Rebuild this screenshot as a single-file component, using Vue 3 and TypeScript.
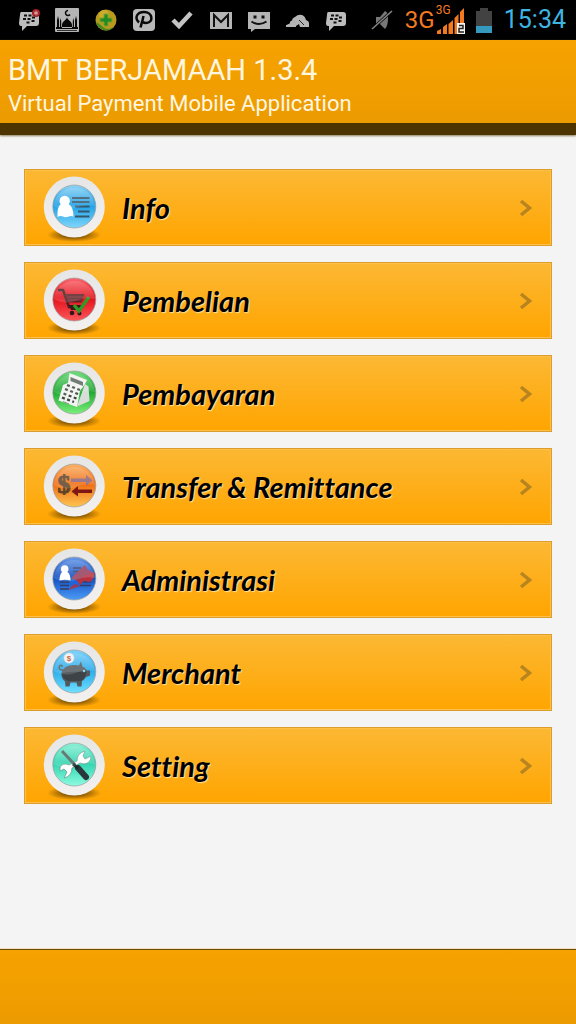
<script setup lang="ts">
interface MenuItem {
  id: string
  label: string
  light: string
  dark: string
  glow: string
}

const items: MenuItem[] = [
  { id: 'info', label: 'Info', light: '#8fd4f5', dark: '#1a9fe6', glow: '#7fd6fb' },
  { id: 'buy', label: 'Pembelian', light: '#fb6a70', dark: '#e30d18', glow: '#fb5a5c' },
  { id: 'pay', label: 'Pembayaran', light: '#6fdc7c', dark: '#18a52c', glow: '#7bf07c' },
  { id: 'transfer', label: 'Transfer & Remittance', light: '#fbb367', dark: '#ef6a10', glow: '#fdc552' },
  { id: 'admin', label: 'Administrasi', light: '#6c9be8', dark: '#0d4cc0', glow: '#4d9bf5' },
  { id: 'merchant', label: 'Merchant', light: '#7fd3fa', dark: '#27a9ea', glow: '#6fe0ff' },
  { id: 'setting', label: 'Setting', light: '#8cf0d6', dark: '#2cd4ae', glow: '#8dfbe0' },
]

const notices = ['bbm-alert', 'mosque', 'shield', 'path', 'check', 'gmail', 'sms', 'prayer', 'bbm']
</script>

<template>
  <div class="screen">
    <div class="status">
      <div class="notices">
        <svg v-for="n in notices" :key="n" class="notice" viewBox="0 0 26 26" aria-hidden="true">
          <g v-if="n === 'bbm-alert' || n === 'bbm'">
            <path fill="#bdbdbd" d="M5 5h15q3 0 3 3v8q0 3-3 3h-9l-5 5v-5H5q-2 0-2-3l1-8q0-3 1-3z" />
            <path stroke="#111" stroke-width="2" d="M8 8.500h3M12.500 8.500h3M7 12h3M11.500 12h3M16 10.500h3M10.500 15.500h3M15.500 14h3" />
            <g v-if="n === 'bbm-alert'">
              <circle cx="20" cy="6" r="4" fill="#9c1f24" />
              <path stroke="#e8a0a0" d="M20 3.500v5M17.800 4.800l4.400 2.400M22.200 4.800l-4.400 2.400" />
            </g>
          </g>
          <g v-else-if="n === 'mosque'">
            <rect x="1" y="1" width="24" height="24" rx="1" fill="#b5b5b5" />
            <path fill="#080808" d="M13 10c0 3-5 4-5 8v3h10v-3c0-4-5-5-5-8zM3 13l1-4 1 4v8H3zM21 13l1-4 1 4v8h-2zM6 14l.6-3 .6 3v7H6zM18.800 14l.6-3 .6 3v7h-1.200zM2 20h22v2H2z" />
            <path fill="none" stroke="#080808" stroke-width="1.500" d="M14 3.500a2.500 2.500 0 1 0 2 4" />
            <path stroke="#333" d="M3 23.500h20" />
          </g>
          <g v-else-if="n === 'shield'">
            <circle cx="13" cy="13" r="10.500" fill="#b99a1c" />
            <path fill="#4b8a22" d="M3 15a10.500 10.500 0 0 0 18 5Q14 24 10 20T3 15z" />
            <circle cx="11" cy="8" r="5" fill="#d3b532" opacity=".7" />
            <path fill="#228b22" stroke="#80a030" d="M11 7h4v4h4v4h-4v4h-4v-4H7v-4h4z" />
          </g>
          <g v-else-if="n === 'path'">
            <rect x="2" y="2" width="22" height="22" rx="4" fill="#b9b9b9" />
            <path fill="none" stroke="#080808" stroke-width="2.500" d="M8 15.500C3 11 6 5 13 5c9 0 10 11 2 11q-2 0-3-1M12.500 9c-1 5-2 8-3 11.500" />
          </g>
          <path v-else-if="n === 'check'" fill="none" stroke="#c4c4c4" stroke-width="4.500" d="M4 13l6 6L22 6" />
          <g v-else-if="n === 'gmail'">
            <rect x="2" y="5" width="22" height="17" fill="#b5b5b5" />
            <path fill="none" stroke="#111" stroke-width="2" d="M6 20V8l7 7 7-7v12" />
          </g>
          <g v-else-if="n === 'sms'">
            <path fill="#b5b5b5" d="M2 5h22v17H9l-4 3v-3H2z" />
            <path stroke="#111" stroke-width="3" d="M9 8.500v3M17 8.500v3" />
            <path fill="none" stroke="#111" stroke-width="2" d="M5.500 14.500q7.500 5 15 0" />
          </g>
          <g v-else>
            <path fill="#b5b5b5" d="M8 14q0-3 3-4 3-3 7-2 3 1 4 5 3 1 3 3v4h-9l-1-3-3 2H9l2-4z" />
            <circle cx="8.500" cy="16" r="2.600" fill="#b5b5b5" />
            <path stroke="#b5b5b5" stroke-width="2" d="M2 19h10M3 19l4-2" />
            <path fill="none" stroke="#222" d="M15 13l5 5" />
          </g>
        </svg>
      </div>
      <svg class="mute" viewBox="0 0 22 26" aria-hidden="true">
        <path fill="#777" d="M5 10h4l5-6q4 2 3 7 0 8-3 11l-5-5H5z" />
        <path stroke="#000" stroke-width="3" d="M1 22L21 4" />
        <path stroke="#888" stroke-width="1.500" d="M1 22L21 4" />
      </svg>
      <span class="net">3G</span>
      <span class="signal">
        <span class="net-small">3G</span>
        <svg viewBox="0 0 30 28" aria-hidden="true">
          <path fill="#f47a22" d="M1 28v-3l4-2v5zM7 28v-7l4-3v10zM12.500 28V18l4.500-4v14zM18.500 28V12l4-4v20zM24 28V6l4-4v26z" />
          <rect x="21" y="17" width="8" height="11" fill="#f7f3ef" />
          <path fill="none" stroke="#222" stroke-width="1.500" d="M23 19.500h4v3h-4v3.500h5" />
        </svg>
      </span>
      <svg class="battery" viewBox="0 0 16 25" aria-hidden="true">
        <path fill="#424242" d="M4 0h8v3h4v15H0V3h4z" />
        <rect y="18" width="16" height="7" fill="#3499bd" />
      </svg>
      <time class="clock">15:34</time>
    </div>

    <header class="header">
      <h1>BMT BERJAMAAH 1.3.4</h1>
      <p>Virtual Payment Mobile Application</p>
    </header>

    <main class="menu">
      <button v-for="item in items" :key="item.id" type="button" class="row">
        <svg class="icon" viewBox="0 0 64 68" aria-hidden="true">
          <defs>
            <linearGradient :id="item.id + '-fill'" x1="0" y1="0" x2="0" y2="1">
              <stop offset="0" :stop-color="item.light" />
              <stop offset=".45" :stop-color="item.dark" />
              <stop offset="1" :stop-color="item.glow" />
            </linearGradient>
            <radialGradient :id="item.id + '-shade'">
              <stop offset=".2" stop-color="#5a3a00" stop-opacity=".9" />
              <stop offset="1" stop-color="#5a3a00" stop-opacity="0" />
            </radialGradient>
            <linearGradient :id="item.id + '-ring'" x1="0" y1="0" x2="0" y2="1">
              <stop offset="0" stop-color="#e6e6e6" />
              <stop offset="1" stop-color="#f3f1f0" />
            </linearGradient>
          </defs>
          <ellipse cx="32" cy="61" rx="27" ry="7" :fill="`url(#${item.id}-shade)`" />
          <circle cx="32.300" cy="33" r="30.500" :fill="`url(#${item.id}-ring)`" />
          <circle cx="32.300" cy="32.500" r="21.500" :fill="`url(#${item.id}-fill)`" stroke="#9a9a9a" stroke-opacity=".7" />

          <g v-if="item.id === 'info'">
            <path stroke="#35566b" stroke-width="1.800" d="M30 24h17.500M30 28h17.500M33 32.500h14.500M36 37.500h11.500M33 42.500h14.500" />
            <circle cx="22.700" cy="27" r="5.200" fill="#fff" />
            <path fill="#fff" d="M19 30h7.500q5 2.500 5 12.500-3-1-4.500 0-4 1.500-6 0-3-1-5.500 .5-.5-10.500 3.500-13z" />
          </g>
          <g v-else-if="item.id === 'buy'">
            <path fill="none" stroke="#4a2024" stroke-width="2.500" stroke-linejoin="round" d="M16 23h5l6 17h13" />
            <path fill="#5b2227" d="M24 27h18.500l-3 8.500H27z" />
            <path stroke="#8d3338" d="M25.500 30h16M27 33h13" />
            <path fill="#3b1719" d="M27 38h12v5H29z" />
            <circle cx="30" cy="46" r="2.300" fill="#30181a" /><circle cx="37.500" cy="46.500" r="2" fill="#30181a" />
            <path fill="none" stroke="#2f9a25" stroke-width="3.500" d="M32 38l5 6 10-14" />
          </g>
          <g v-else-if="item.id === 'pay'">
            <path fill="#d9ddd9" d="M35 46.500L43 24l3.500 2.500 1 14.500z" />
            <path fill="#f1f3f1" d="M16.500 40.500L21 25l5-2 1.500-10L45 20l-2 4-5 7-3 16z" />
            <path fill="#5b665d" d="M28.500 17l12.500 5v4l-12.500-5z" />
            <path stroke="#3b443c" stroke-width="2.300" stroke-dasharray="3 2.500" d="M25 25l13 5M23 29l13 5M21.500 33.500l13 5M20 37.500l12 4.500" />
            <path stroke="#879088" d="M21 41.500l6 2.500" />
          </g>
          <g v-else-if="item.id === 'transfer'">
            <text class="dollar" x="22" y="40" text-anchor="middle" fill="#5f4428" stroke="#5f4428">$</text>
            <path fill="#8b6277" d="M29 25.500h15v-3.500l6.500 5.500-6.500 5v-3.500H29z" />
            <path fill="#7d1713" d="M50 36.500H36V33l-6.500 5.500 6.500 5V40h14z" />
          </g>
          <g v-else-if="item.id === 'admin'">
            <path stroke="#343d65" stroke-width="1.300" d="M31 22h8M31 25.500h8M18 36h9M18 39.500h9M18 43h9M31 36h18M31 39.500h18" />
            <path fill="#963b59" d="M30 31l13-12 3 5 7 3q-1 7-5 9l-6-1-6 6-10 3 5-5z" />
            <path fill="#c42f38" d="M35 34l12-6 5-1q-1 7-5 9l-5-2-5 6z" opacity=".75" />
            <path fill="#1e65dc" d="M30 33q7 1 8 7l-5-2-5 2z" />
            <circle cx="22.700" cy="23" r="3.800" fill="#fff" />
            <path fill="#fff" d="M20 26h5.500q3 2 3 8.500-5.500-1.500-11 0 0-6 2.500-8.500z" />
          </g>
          <g v-else-if="item.id === 'merchant'">
            <path fill="#535a5f" d="M19.500 34q2-8 12.500-8 4 0 5 .5l2-4 1.500 5q3 1 4.500 4l3 0v5l-4 1.500q-2 3-4 4l-.5 5.500h-4l-1-4h-6l-1 4h-4l-.5-5q-4-3-3.500-8.500z" />
            <path fill="none" stroke="#535a5f" stroke-width="1.500" d="M21 31q-5 0-3.500-4 2-2 3 1" />
            <path fill="#3e4347" d="M19.500 34q12-2 25-1-1 7-6 9H26q-6-3-6.500-8z" />
            <circle cx="42" cy="32" r="1.200" fill="#80d7f2" />
            <circle cx="27" cy="19" r="5.200" fill="#eef2f2" stroke="#bcc" stroke-width=".6" />
            <text class="coin" x="27" y="22" text-anchor="middle" fill="#c34b32">$</text>
          </g>
          <g v-else>
            <path fill="#fff" stroke="#6c9c90" stroke-width=".8" d="M18 39q-1-7 6-7l3 1 8-4q0-8 8-10l-2 5 2 3 6-3q0 7-7 8l-4-1-8 5q0 8-8 10l3-6-3-3z" />
            <path stroke="#4f625e" stroke-width="3" d="M20 19l13 14" />
            <path stroke="#29393b" stroke-width="6" stroke-linecap="round" d="M36 36l8 9" />
            <path stroke="#17282b" stroke-width="3" d="M31 32l5 4" />
          </g>
          <path fill="#fff" opacity=".15" d="M11.500 32a21 21 0 0 1 41.600 0q-10-2-20 2t-21.600-2z" />
        </svg>
        <span class="label">{{ item.label }}</span>
        <svg class="chevron" viewBox="0 0 14 18" aria-hidden="true">
          <path fill="none" stroke="#b8841f" stroke-width="3.500" d="M2 2l8.500 7L2 16" />
        </svg>
      </button>
    </main>

    <footer class="footer"></footer>
  </div>
</template>

<style>
body {
  background: #f4f4f4;
}
</style>

<style scoped>
.screen {
  display: flex;
  flex-direction: column;
  min-height: 100vh;
  font-family: Roboto, "Liberation Sans", sans-serif;
}
.status {
  display: flex;
  align-items: center;
  height: 40px;
  padding: 0 10px;
  background: #000;
}
.notices {
  display: flex;
  flex: 1;
  justify-content: space-around;
}
.notice {
  width: 26px;
  height: 26px;
}
.mute {
  width: 22px;
  height: 26px;
  margin: 0 12px 0 16px;
}
.net {
  width: 31px;
  color: #f47a22;
  font-size: 24px;
  line-height: 40px;
}
.signal {
  position: relative;
  width: 30px;
  height: 28px;
}
.signal svg {
  display: block;
  width: 30px;
  height: 28px;
}
.net-small {
  position: absolute;
  top: -4px;
  left: 0;
  color: #f47a22;
  font-size: 12px;
  line-height: 16px;
}
.battery {
  width: 16px;
  height: 25px;
  margin: 0 12px 0 10px;
}
.clock {
  color: #3fb4e0;
  font-size: 25px;
  line-height: 42px;
}
.header {
  padding: 12px 8px 4px;
  border-bottom: 12px solid #4d3300;
  background: linear-gradient(#f6a200, #ec9b00);
  box-shadow: 0 1px 2px #8a7a5a;
  color: #fff6e0;
}
.header h1 {
  margin: 0;
  font-size: 29px;
  font-weight: 400;
  line-height: 36px;
}
.header p {
  margin: 0;
  font-size: 22px;
  line-height: 31px;
}
.menu {
  display: flex;
  flex: 1;
  flex-direction: column;
  gap: 16px;
  padding: 34px 24px;
}
.row {
  display: flex;
  align-items: center;
  height: 77px;
  padding: 0 18px 0 17px;
  border: 1px solid #dc9d2c;
  background: linear-gradient(#fcb834, #ffa500);
  box-shadow: inset 0 0 0 1px #ffc04a;
  color: #000;
  text-align: left;
}
.icon {
  width: 64px;
  height: 68px;
}
.label {
  flex: 1;
  padding-left: 16px;
  font: italic 700 29px/36px Lato, "Liberation Sans", sans-serif;
  font-variant-ligatures: none;
  text-shadow: 1px 1px 1px #ffe3a0;
}
.chevron {
  width: 14px;
  height: 18px;
}
.dollar {
  font: 700 26px "Liberation Serif", serif;
}
.coin {
  font: 700 8px "Liberation Sans", sans-serif;
}
.footer {
  height: 74px;
  border-top: 1px solid #6b4a08;
  background: linear-gradient(#f6a200, #ec9b00);
  box-shadow: 0 -1px 0 #f3e0b8;
}
</style>
